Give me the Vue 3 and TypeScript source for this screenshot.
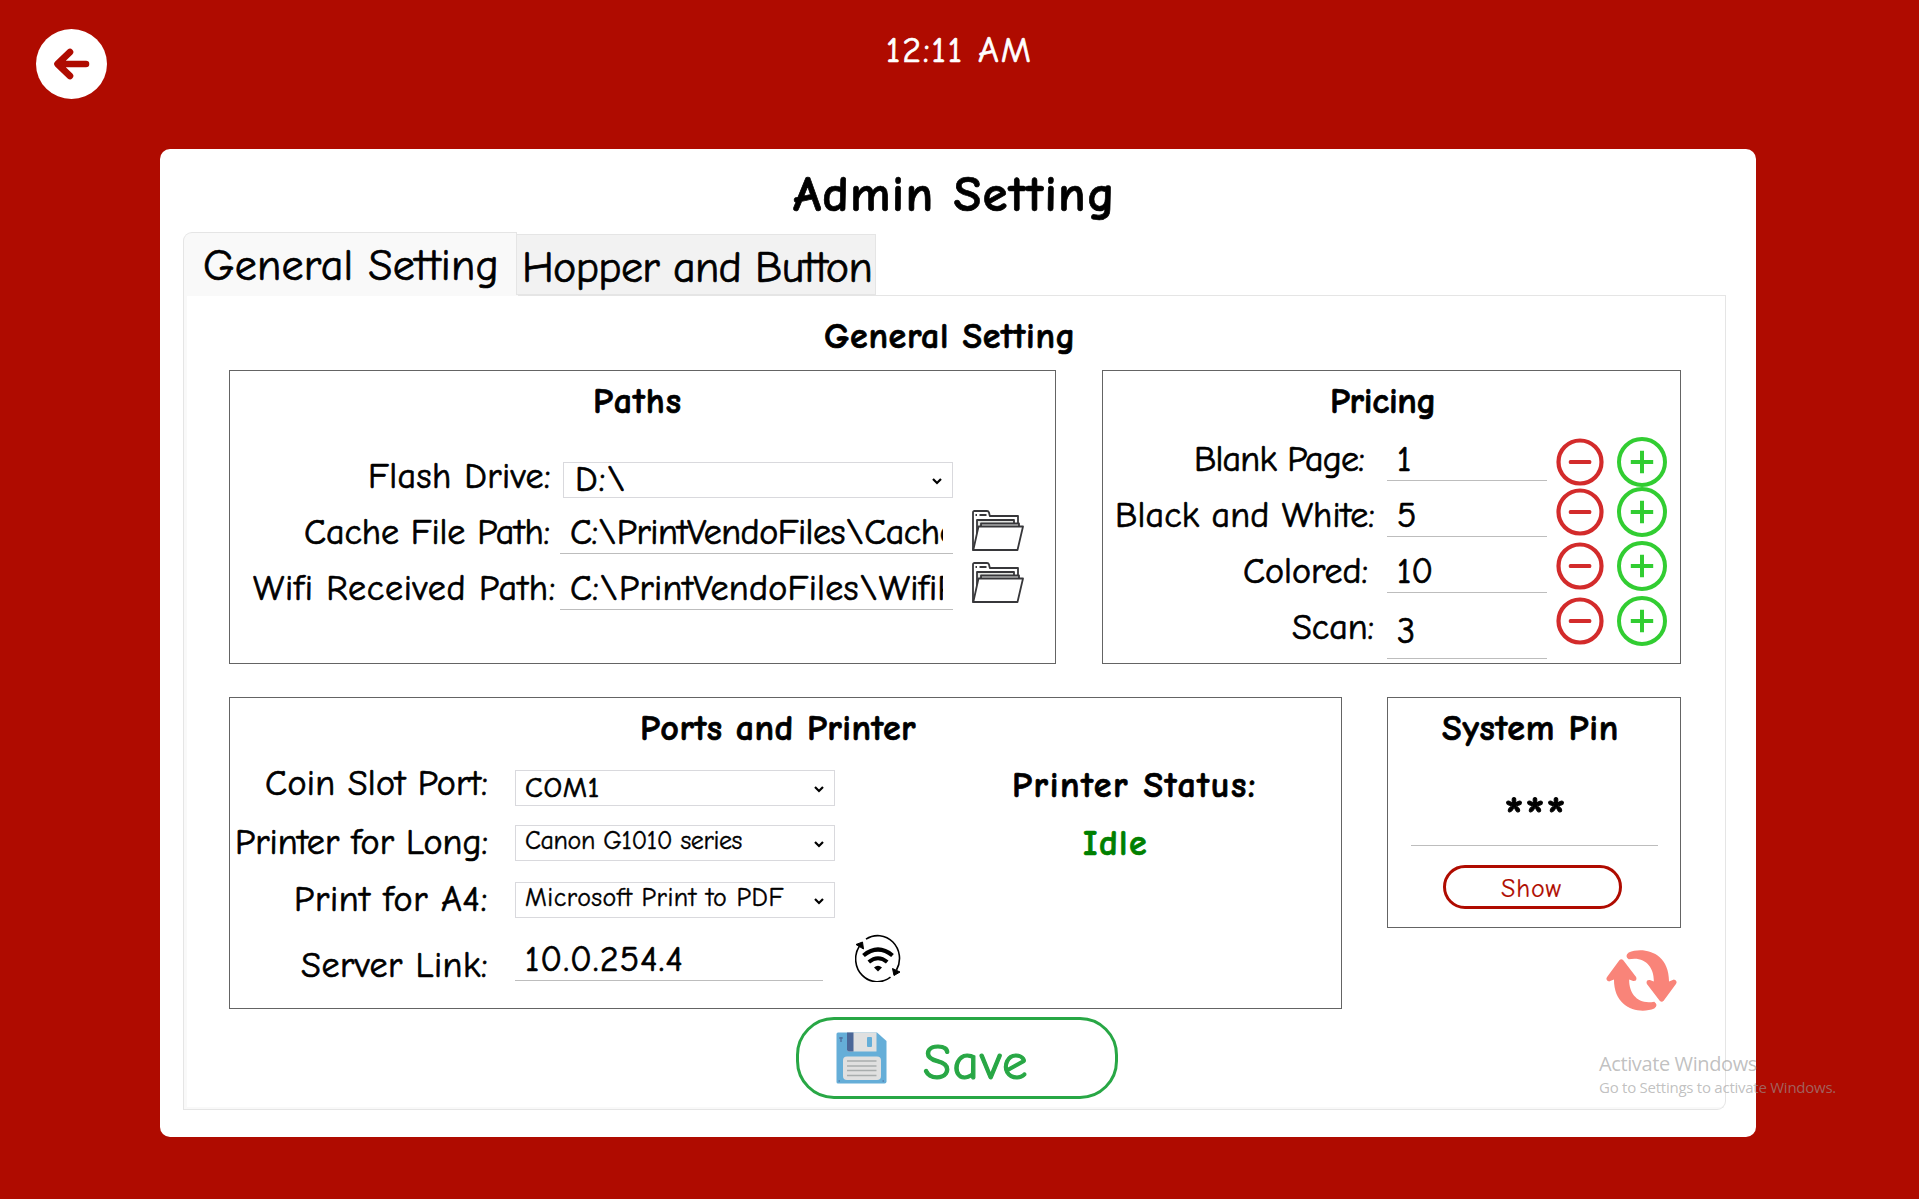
<script setup lang="ts">
import type { Directive } from 'vue'

interface Field {
  label: string
  labelWidth: number
  inset: number
  value: string
  valueWidth: number
}

// Spreads the letters of a line so that it takes exactly the given width.
const vFit: Directive<HTMLElement, number> = {
  mounted(el, { value }) {
    const count = (el.textContent ?? '').length
    const natural = el.getBoundingClientRect().width
    if (count > 0) el.style.letterSpacing = `${(value - natural) / count}px`
  },
}

const paths: Field[] = [
  { label: 'Cache File Path:', labelWidth: 246, inset: 10, value: 'C:\\PrintVendoFiles\\Cache', valueWidth: 387 },
  { label: 'Wifi Received Path:', labelWidth: 303, inset: 4, value: 'C:\\PrintVendoFiles\\WifiR', valueWidth: 389 },
]

const prices: Field[] = [
  { label: 'Blank Page:', labelWidth: 170, inset: 23, value: '1', valueWidth: 18 },
  { label: 'Black and White:', labelWidth: 260, inset: 12, value: '5', valueWidth: 19 },
  { label: 'Colored:', labelWidth: 125, inset: 19, value: '10', valueWidth: 36 },
  { label: 'Scan:', labelWidth: 82, inset: 13, value: '3', valueWidth: 19 },
]

const portLabels = [
  { text: 'Coin Slot Port:', width: 223 },
  { text: 'Printer for Long:', width: 253 },
  { text: 'Print for A4:', width: 194 },
  { text: 'Server Link:', width: 187 },
]

const ports = [
  { value: 'COM1', width: 75, size: 'large' },
  { value: 'Canon G1010 series', width: 217, size: 'small' },
  { value: 'Microsoft Print to PDF', width: 259, size: 'small' },
]
</script>

<template>
  <main class="page">
    <header class="top">
      <button class="back" aria-label="Back">
        <svg width="71" height="70" viewBox="0 0 71 70">
          <ellipse cx="35.500" cy="35" rx="35.500" ry="35" fill="#fff" />
          <path d="M50 35H22M34 23L21.500 35L34 47" fill="none" stroke="#af0b00" stroke-width="6.600" stroke-linecap="round" stroke-linejoin="round" />
        </svg>
      </button>
      <time class="clock"><span v-fit="147">12:11 AM</span></time>
    </header>

    <section class="card">
      <h1 class="title"><span v-fit="323">Admin Setting</span></h1>

      <nav class="tabs">
        <button class="tab active"><span v-fit="296">General Setting</span></button>
        <button class="tab"><span v-fit="350">Hopper and Button</span></button>
      </nav>

      <div class="panel">
        <h2 class="heading"><span v-fit="252">General Setting</span></h2>

        <div class="row">
          <section class="box paths">
            <h3 class="box-title"><span v-fit="89">Paths</span></h3>
            <div class="path-row">
              <label class="path-label drive-label"><span v-fit="183">Flash Drive:</span></label>
              <div class="combo drive">
                <span v-fit="52">D:\</span>
                <svg class="chevron" width="10" height="7" viewBox="0 0 10 7"><path d="M1 1L5 5L9 1" /></svg>
              </div>
            </div>
            <div v-for="p in paths" :key="p.label" class="path-row">
              <label class="path-label" :style="{ paddingRight: p.inset + 'px' }"><span v-fit="p.labelWidth">{{ p.label }}</span></label>
              <div class="field path-field">
                <div class="clip"><span v-fit="p.valueWidth">{{ p.value }}</span></div>
              </div>
              <svg class="folder" width="52" height="42" viewBox="0 0 52 42">
                <g fill="#fff" stroke="#37373a" stroke-width="1.800" stroke-linejoin="round">
                  <path d="M1 40V2.500Q1 1 2.500 1H15Q16.500 1 17 2.500L17.800 6H46V36L42 40Z" />
                  <path d="M5 36V10H42V18" fill="#e3e5e2" />
                  <path d="M9 20V13.500H47V20" fill="#e3e5e2" />
                  <path d="M6.500 16.500H51L45.500 40H1.300Z" />
                  <path d="M3.500 5H5M7.500 5H14.500" />
                </g>
              </svg>
            </div>
          </section>

          <section class="box pricing">
            <h3 class="box-title"><span v-fit="106">Pricing</span></h3>
            <div class="pricing-body">
              <div class="price-list">
                <div v-for="p in prices" :key="p.label" class="price-row">
                  <label class="price-label" :style="{ paddingRight: p.inset + 'px' }"><span v-fit="p.labelWidth">{{ p.label }}</span></label>
                  <div class="field price-field"><span v-fit="p.valueWidth">{{ p.value }}</span></div>
                </div>
              </div>
              <div class="steppers">
                <div v-for="p in prices" :key="p.label" class="stepper">
                  <svg width="48" height="50" viewBox="0 0 48 50">
                    <circle cx="24" cy="25" r="21.500" fill="none" stroke="#d32b2b" stroke-width="4.200" />
                    <rect x="12.800" y="23" width="22.500" height="4" rx="1.500" fill="#d32b2b" />
                  </svg>
                  <svg width="50" height="50" viewBox="0 0 50 50">
                    <circle cx="25" cy="25" r="23" fill="none" stroke="#32cd32" stroke-width="4" />
                    <path d="M13.800 25H36.200M25 13.800V36.200" stroke="#32cd32" stroke-width="4" />
                  </svg>
                </div>
              </div>
            </div>
          </section>
        </div>

        <div class="row lower">
          <section class="box ports">
            <h3 class="box-title"><span v-fit="276">Ports and Printer</span></h3>
            <div class="ports-body">
              <div class="port-labels">
                <label v-for="l in portLabels" :key="l.text"><span v-fit="l.width">{{ l.text }}</span></label>
              </div>
              <div class="port-fields">
                <div v-for="p in ports" :key="p.value" class="combo" :class="p.size">
                  <span v-fit="p.width">{{ p.value }}</span>
                  <svg class="chevron" width="10" height="7" viewBox="0 0 10 7"><path d="M1 1L5 5L9 1" /></svg>
                </div>
                <div class="field server"><span v-fit="159">10.0.254.4</span></div>
              </div>
              <svg class="wifi" width="46" height="48" viewBox="0 0 46 48">
                <g fill="none" stroke="#000">
                  <path d="M11 5.200A21.800 22.800 0 0 1 41.500 36" stroke-width="1.600" />
                  <path d="M35.500 43.200A21.800 22.800 0 0 1 4.500 12" stroke-width="1.600" />
                  <path d="M8.500 21.500Q23 9.500 37.500 21.500" stroke-width="4.200" />
                  <path d="M13.800 28Q23 20.500 32.200 28" stroke-width="4" />
                </g>
                <path d="M19 33.500Q23 30 27 33.500L23 37.500Z" />
                <path d="M1 10.500L7.500 8L8.500 15Z M37.500 34.500L45 38L39 41.500Z" stroke="#000" stroke-linejoin="round" />
              </svg>
              <div class="status">
                <strong><span v-fit="245">Printer Status:</span></strong>
                <strong class="idle"><span v-fit="65">Idle</span></strong>
              </div>
            </div>
          </section>

          <div class="side">
            <section class="box pin">
              <h3 class="box-title"><span v-fit="177">System Pin</span></h3>
              <div class="field pin-field"><span v-fit="63">***</span></div>
              <button class="show"><span v-fit="61">Show</span></button>
            </section>
            <svg class="refresh" width="71" height="61" viewBox="0 0 72 62">
              <g fill="#f98479">
                <path d="M23 2.500C38-3.500 64 2 64 32L69 30Q73 31 71 34.500L58.500 51.500Q56.500 53.500 54.500 51.500L41.500 34.500Q40 30 44.500 30.500L48.500 32C49 18 40 6 23 9.500Q18.500 6 23 2.500Z" />
                <path d="M49 59.500C34 65.500 8 60 8 30L3 32Q-1 31 1 27.500L13.500 10.500Q15.500 8.500 17.500 10.500L30.500 27.500Q32 32 27.500 31.500L23.500 30C23 44 32 56 49 52.500Q53.500 56 49 59.500Z" />
              </g>
            </svg>
          </div>
        </div>

        <button class="save">
          <svg width="51" height="52" viewBox="0 0 51 52">
            <path d="M2 .5H41L50.500 9V49.500Q50.500 51.500 48.500 51.500H2Q.5 51.500 .5 50V2Q.5 .5 2 .5Z" fill="#65aed8" />
            <path d="M11 .5H40.500V19.500H13Q11 19.500 11 17.500Z" fill="#e0e0e0" />
            <path d="M11 .5H17.500V19.500H13Q11 19.500 11 17.500Z" fill="#4b6798" />
            <rect x="31" y="5" width="5" height="10" rx="1" fill="#65aed8" />
            <rect x="7" y="24.500" width="38" height="23.500" rx="4" fill="#e0e0e0" />
            <path d="M11 29H40.500M11 34H40.500M11 38.500H40.500M11 43.500H40.500" stroke="#a9adad" stroke-width="1.400" />
            <path d="M5 5V10M3 6H7M2.500 49H4M46.500 49H48" stroke="#4b6798" stroke-width="1.200" />
          </svg>
          <span v-fit="106">Save</span>
        </button>
      </div>
    </section>

    <aside class="watermark">
      <div class="wm-title"><span v-fit="158">Activate Windows</span></div>
      <div class="wm-text"><span v-fit="237">Go to Settings to activate Windows.</span></div>
    </aside>
  </main>
</template>

<style>
body {
  margin: 0;
  overflow: hidden;
}
</style>

<style scoped>
* {
  box-sizing: border-box;
}
.page {
  position: relative;
  width: 1919px;
  height: 1199px;
  background: #af0b00;
  color: #000;
  font: 36px/36px "Comic Sans MS", "Comic Neue", "Noto Sans", sans-serif;
  font-variant-ligatures: none;
  -webkit-text-stroke: 0.700px currentColor;
  white-space: nowrap;
  overflow: hidden;
}
h1, h2, h3 {
  margin: 0;
  font-size: inherit;
  font-weight: 700;
}
button {
  padding: 0;
  border: 0;
  background: none;
  color: inherit;
  font: inherit;
  font-variant-ligatures: none;
}
svg {
  display: block;
  flex: none;
}
span {
  display: inline-block;
  margin-top: 1px;
}
.top {
  display: grid;
  grid-template-columns: 1fr auto 1fr;
  height: 149px;
}
.back {
  justify-self: start;
  align-self: start;
  margin: 29px 0 0 36px;
}
.clock {
  margin-top: 32px;
  color: #fff;
}
.card {
  width: 1596px;
  height: 988px;
  margin-left: 160px;
  border-radius: 10px;
  background: #fff;
}
.title {
  height: 83px;
  padding-left: 633px;
  font-size: 51px;
  line-height: 90px;
}
.tabs {
  display: flex;
  align-items: flex-end;
  height: 63px;
  margin-left: 23px;
  font-size: 44px;
}
.tab {
  width: 359px;
  height: 61px;
  padding-left: 2px;
  border: 1px solid #e5e5e5;
  border-left: 0;
  background: #f2f2f2;
  line-height: 64px;
  text-align: center;
}
.tab.active {
  width: 334px;
  height: 63px;
  border-left: 1px solid #e5e5e5;
  border-bottom: 0;
  border-radius: 9px 0 0 0;
  background: #f9f9f9;
}
.panel {
  width: 1543px;
  height: 815px;
  margin-left: 23px;
  padding: 0 44px 0 42px;
  border: 1px solid #e5e5e5;
  border-top: 0;
  border-radius: 0 0 9px 0;
  box-shadow: inset 3px -2px 0 #f9f9f9;
  background: linear-gradient(90deg, #f9f9f9 334px, #e5e5e5 334px) top / 100% 1px no-repeat, #fff;
}
.heading {
  height: 75px;
  padding: 23px 0 0 598px;
}
.row {
  display: flex;
  justify-content: space-between;
  margin-left: 3px;
}
.lower {
  align-items: flex-start;
  margin-top: 33px;
}
.box {
  border: 1px solid #646464;
}
.box-title {
  height: 58px;
  line-height: 60px;
}
.paths {
  width: 827px;
  height: 294px;
}
.paths .box-title {
  padding-left: 363px;
  margin-bottom: 18px;
}
.path-row {
  display: flex;
  align-items: flex-start;
  height: 56px;
  line-height: 57px;
}
.path-label {
  width: 330px;
  padding-right: 9px;
  text-align: right;
}
.combo {
  display: flex;
  align-items: center;
  justify-content: space-between;
  width: 320px;
  height: 36px;
  padding: 0 10px 3px 9px;
  border: 1px solid #d9d9dd;
  line-height: 31px;
}
.combo.large {
  font-size: 29px;
  padding-bottom: 2px;
}
.combo.small {
  padding-bottom: 4px;
  font-size: 26px;
  -webkit-text-stroke-width: 0.400px;
}
.chevron {
  position: relative;
  top: 2px;
  fill: none;
  stroke: #000;
  stroke-width: 2.200;
}
.combo.small .chevron {
  top: 3px;
}
.drive {
  width: 390px;
  margin: 15px 0 0 3px;
  padding-left: 11px;
  padding-bottom: 2px;
}
.field {
  border-bottom: 1px solid #bdbdbd;
}
.path-field {
  width: 393px;
  height: 51px;
  padding: 0 10px 0 10px;
}
.clip {
  height: 50px;
  overflow: hidden;
}
.folder {
  margin: 7px 0 0 19px;
}
.path-row:last-child .folder {
  margin-top: 3px;
}
.pricing {
  width: 579px;
  height: 294px;
}
.pricing .box-title {
  padding-left: 227px;
}
.pricing-body {
  display: flex;
}
.price-row {
  display: flex;
  height: 56px;
  line-height: 59px;
}
.price-label {
  width: 284px;
  text-align: right;
}
.price-field {
  width: 160px;
  height: 52px;
  padding-left: 10px;
}
.price-row:last-child .price-field {
  height: 62px;
  line-height: 68px;
}
.steppers {
  padding: 8px 0 0 9px;
}
.stepper {
  display: flex;
  gap: 13px;
  height: 50px;
}
.stepper:nth-child(3) {
  margin-top: 4px;
}
.stepper:nth-child(4) {
  margin-top: 5px;
}
.ports {
  width: 1113px;
  height: 312px;
}
.ports .box-title {
  padding-left: 410px;
}
.ports-body {
  display: flex;
  align-items: flex-start;
}
.port-labels {
  display: flex;
  flex-direction: column;
  width: 285px;
  padding: 9px 27px 0 0;
}
.port-labels label {
  display: flex;
  justify-content: flex-end;
  height: 36px;
  margin-bottom: 21px;
}
.port-labels label:first-child {
  margin-bottom: 23px;
}
.port-labels label:nth-child(3) {
  margin-bottom: 30px;
}
.port-fields {
  width: 321px;
  padding-top: 14px;
}
.port-fields .combo:nth-child(1) {
  margin-bottom: 19px;
}
.port-fields .combo:nth-child(2) {
  margin-bottom: 21px;
}
.server {
  width: 308px;
  height: 41px;
  margin-top: 22px;
  padding-left: 10px;
  line-height: 37px;
}
.wifi {
  margin: 178px 0 0 19px;
}
.status {
  display: flex;
  flex-direction: column;
  padding: 11px 0 0 111px;
}
.idle {
  margin: 21px 0 0 71px;
  color: #008000;
}
.side {
  width: 294px;
}
.pin {
  display: flex;
  flex-direction: column;
  height: 231px;
}
.pin .box-title {
  padding-left: 54px;
}
.pin-field {
  width: 247px;
  height: 90px;
  margin-left: 23px;
  padding-top: 44px;
  font-size: 56px;
  text-align: center;
  -webkit-text-stroke-width: 1px;
}
.show {
  width: 179px;
  height: 44px;
  margin: 19px 0 0 55px;
  padding-right: 2px;
  border: 3px solid #af0b00;
  border-radius: 22px;
  color: #af0b00;
  font-size: 26px;
  line-height: 40px;
  text-align: center;
  -webkit-text-stroke-width: 0.200px;
}
.refresh {
  margin: 22px 0 -10px 219px;
}
.save {
  display: flex;
  align-items: center;
  width: 322px;
  height: 82px;
  margin: 8px 0 0 570px;
  padding: 0 0 1px 37px;
  border: 3px solid #28a745;
  border-radius: 38px;
  color: #28a745;
  font-size: 51px;
  line-height: 60px;
  -webkit-text-stroke-width: 1.200px;
}
.save span {
  margin: 11px 0 0 36px;
}
.watermark {
  position: absolute;
  top: 1049px;
  left: 1599px;
  color: rgba(153, 153, 153, 0.62);
  font-family: "Segoe UI", "Open Sans", sans-serif;
  -webkit-text-stroke-width: 0;
}
.watermark span {
  margin-top: 0;
}
.wm-title {
  font-size: 20px;
  line-height: 30px;
}
.wm-text {
  font-size: 15px;
  line-height: 17px;
}
</style>
